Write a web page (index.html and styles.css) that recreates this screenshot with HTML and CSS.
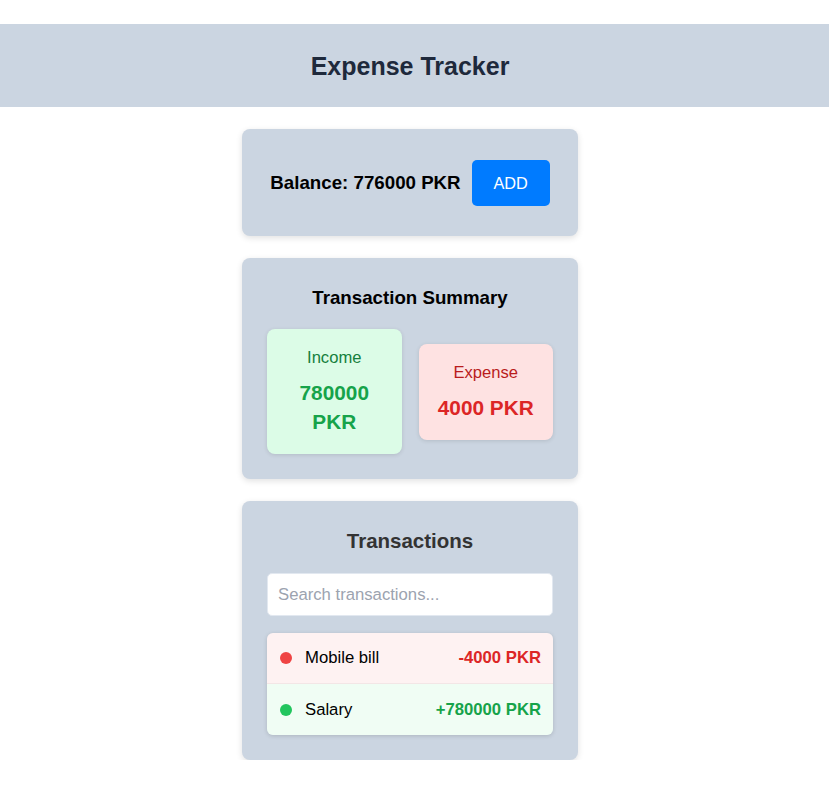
FILE: index.html
```html
<!DOCTYPE html>
<html lang="en">
<head>
<meta charset="utf-8">
<title>Expense Tracker</title>
<link rel="stylesheet" href="styles.css">
</head>
<body>
<header class="app-header">
  <h1 class="app-title">Expense Tracker</h1>
</header>
<main class="container">
  <section class="card balance-card">
    <h3 class="balance">Balance: 776000 PKR</h3>
    <button class="add-btn" type="button">ADD</button>
  </section>

  <section class="card">
    <h3 class="card-title">Transaction Summary</h3>
    <div class="summary">
      <div class="summary-box income">
        <div class="summary-label">Income</div>
        <div class="summary-value">780000 PKR</div>
      </div>
      <div class="summary-box expense">
        <div class="summary-label">Expense</div>
        <div class="summary-value">4000 PKR</div>
      </div>
    </div>
  </section>

  <section class="card">
    <h2 class="tx-title">Transactions</h2>
    <input class="search" type="text" placeholder="Search transactions...">
    <ul class="tx-list">
      <li class="tx-row tx-expense">
        <span class="dot"></span>
        <span class="tx-name">Mobile bill</span>
        <span class="tx-amount">-4000 PKR</span>
      </li>
      <li class="tx-row tx-income">
        <span class="dot"></span>
        <span class="tx-name">Salary</span>
        <span class="tx-amount">+780000 PKR</span>
      </li>
    </ul>
  </section>
</main>
</body>
</html>
```

FILE: styles.css
```css
* { box-sizing: border-box; }

html, body {
  margin: 0;
  padding: 0;
  background: #ffffff;
  font-family: "Liberation Sans", Arial, sans-serif;
  color: #000;
}

body {
  padding-top: 24px;
}

.app-header {
  background: #cbd5e1;
  height: 83px;
  padding-right: 9px;
  padding-top: 2px;
  display: flex;
  align-items: center;
  justify-content: center;
}

.app-title {
  margin: 0;
  font-size: 25px;
  font-weight: 700;
  color: #1e293b;
  line-height: 29px;
}

.container {
  width: 336px;
  margin: 22px 0 0 calc(50% - 172.5px);
  display: flex;
  flex-direction: column;
  gap: 22px;
}

.card {
  background: #cbd5e1;
  border-radius: 8px;
  box-shadow: 0 2px 6px rgba(0, 0, 0, 0.12);
  padding: 25px;
}

.balance-card {
  padding: 31px 25px 30px;
  display: flex;
  align-items: center;
  justify-content: center;
  gap: 11px;
}

.balance {
  margin: 0;
  font-size: 18.72px;
  font-weight: 700;
  line-height: 22px;
}

.add-btn {
  background: #007bff;
  color: #fff;
  border: none;
  border-radius: 5px;
  width: 78px;
  height: 46px;
  font-family: "Liberation Sans", Arial, sans-serif;
  font-size: 16.3px;
  padding: 0;
}

.card-title {
  margin: 4px 0 0;
  text-align: center;
  font-size: 18.72px;
  font-weight: 700;
  line-height: 22px;
}

.summary {
  margin-top: 20px;
  display: flex;
  align-items: center;
  gap: 17px;
}

.summary-box {
  flex: 1;
  border-radius: 8px;
  padding: 19px 12px 18px;
  text-align: center;
  box-shadow: 0 1px 4px rgba(0, 0, 0, 0.12);
}

.summary-label {
  font-size: 16.6px;
  line-height: 19px;
}

.summary-value {
  margin-top: 11px;
  font-size: 20.8px;
  font-weight: 700;
  line-height: 29px;
}

.income { background: #dcfce7; }
.income .summary-label { color: #15803d; }
.income .summary-value { color: #16a34a; }

.expense { background: #fee2e2; }
.expense .summary-label { color: #b91c1c; }
.expense .summary-value { color: #dc2626; }

.tx-title {
  margin: 3px 0 0;
  text-align: center;
  font-size: 20.5px;
  font-weight: 700;
  line-height: 24px;
  color: #333333;
}

.search {
  display: block;
  width: 100%;
  height: 43px;
  margin-top: 20px;
  border: 1px solid #e2e8f0;
  border-radius: 5px;
  background: #fff;
  padding: 0 10px;
  font-family: "Liberation Sans", Arial, sans-serif;
  font-size: 16.7px;
  color: #000;
}

.search::placeholder { color: #9ca3af; }

.tx-list {
  list-style: none;
  margin: 17px 0 0;
  padding: 0;
  border-radius: 6px;
  overflow: hidden;
  box-shadow: 0 1px 4px rgba(0, 0, 0, 0.15);
}

.tx-row {
  display: flex;
  align-items: center;
  height: 51px;
  padding: 0 12px 0 13px;
  font-size: 16.7px;
}

.tx-expense {
  background: #fef2f2;
  border-bottom: 1px solid #f3e6e6;
}
.tx-income { background: #f0fdf4; }

.dot {
  width: 12px;
  height: 12px;
  border-radius: 50%;
  flex: none;
}

.tx-expense .dot { background: #ef4444; }
.tx-income .dot { background: #22c55e; }

.tx-name {
  margin-left: 13px;
  flex: 1;
}

.tx-amount {
  font-weight: 700;
}

.tx-expense .tx-amount { color: #dc2626; }
.tx-income .tx-amount { color: #16a34a; }
```
